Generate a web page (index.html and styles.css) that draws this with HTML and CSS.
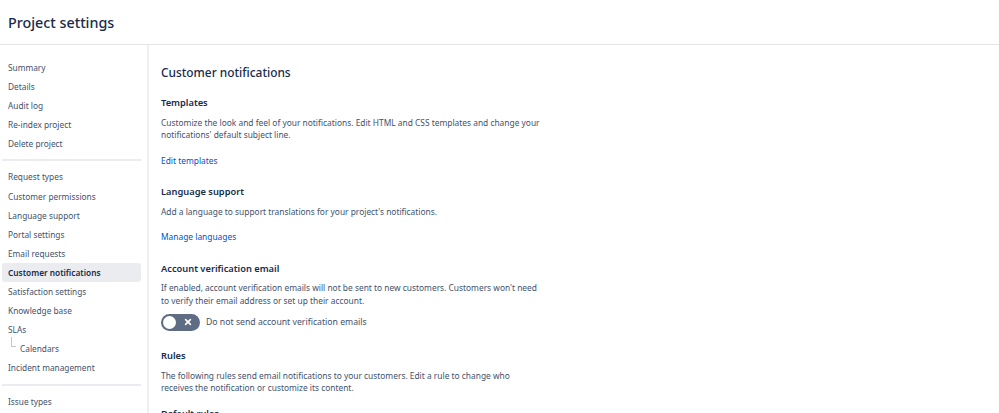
FILE: index.html
```html
<!DOCTYPE html>
<html>
<head>
<meta charset="utf-8">
<link rel="stylesheet" href="styles.css">
</head>
<body>
<header class="top">
  <h1 class="title">Project settings</h1>
</header>
<div class="layout">
  <nav class="side">
    <ul class="group">
      <li class="item">Summary</li>
      <li class="item">Details</li>
      <li class="item">Audit log</li>
      <li class="item">Re-index project</li>
      <li class="item">Delete project</li>
    </ul>
    <ul class="group">
      <li class="item">Request types</li>
      <li class="item">Customer permissions</li>
      <li class="item">Language support</li>
      <li class="item">Portal settings</li>
      <li class="item">Email requests</li>
      <li class="item active">Customer notifications</li>
      <li class="item">Satisfaction settings</li>
      <li class="item">Knowledge base</li>
      <li class="item">SLAs</li>
      <li class="item sub"><span class="elbow"></span>Calendars</li>
      <li class="item">Incident management</li>
    </ul>
    <ul class="group">
      <li class="item">Issue types</li>
    </ul>
  </nav>
  <main class="main">
    <h2 class="page-h">Customer notifications</h2>
    <section class="sec">
      <h3 class="sec-h">Templates</h3>
      <p class="desc">Customize the look and feel of your notifications. Edit HTML and CSS templates and change your notifications' default subject line.</p>
      <a class="link">Edit templates</a>
    </section>
    <section class="sec">
      <h3 class="sec-h">Language support</h3>
      <p class="desc">Add a language to support translations for your project's notifications.</p>
      <a class="link">Manage languages</a>
    </section>
    <section class="sec">
      <h3 class="sec-h">Account verification email</h3>
      <p class="desc tight">If enabled, account verification emails will not be sent to new customers. Customers won't need to verify their email address or set up their account.</p>
      <div class="toggle-row">
        <span class="toggle"><span class="knob"></span><svg class="x" viewBox="0 0 10 10" width="8" height="8"><path d="M2 2L8 8M8 2L2 8" stroke="#fff" stroke-width="2" stroke-linecap="round"/></svg></span>
        <span class="toggle-label">Do not send account verification emails</span>
      </div>
    </section>
    <section class="sec">
      <h3 class="sec-h">Rules</h3>
      <p class="desc">The following rules send email notifications to your customers. Edit a rule to change who receives the notification or customize its content.</p>
      <h4 class="sub-h">Default rules</h4>
    </section>
  </main>
</div>
</body>
</html>
```
FILE: styles.css
```css
* { box-sizing: border-box; }
html, body { margin: 0; padding: 0; background: #fff; overflow: hidden; }
body {
  font-family: "Noto Sans", "Open Sans", sans-serif;
  color: #172b4d;
  width: 999px;
  height: 413px;
}
.top {
  height: 45px;
  border-bottom: 1px solid #e4e5e9;
  padding: 12px 8px 0;
}
.title {
  margin: 0;
  font-size: 14.3px;
  font-weight: 500;
  line-height: 22px;
  color: #172b4d;
}
.layout { display: flex; }
.side {
  width: 149px;
  flex: none;
  border-right: 2px solid #eeeff2;
  padding: 13px 6px 0 2px;
  min-height: 368px;
}
.group {
  list-style: none;
  margin: 0;
  padding: 0 0 6px;
  border-bottom: 2px solid #ebecf0;
  margin-bottom: 6px;
}
.group:last-child { border-bottom: none; }
.item {
  height: 19.1px;
  line-height: 19.1px;
  font-size: 8.3px;
  color: #42526e;
  padding-left: 6px;
  border-radius: 3px;
  white-space: nowrap;
  position: relative;
}
.item.active {
  background: #ebecf0;
  color: #172b4d;
  font-weight: 600;
}
.item.sub { padding-left: 18px; }
.elbow {
  position: absolute;
  left: 9px;
  top: -2px;
  width: 5px;
  height: 10px;
  border-left: 1px solid #c1c7d0;
  border-bottom: 1px solid #c1c7d0;
}
.main {
  flex: 1;
  padding: 18px 0 0 12px;
}
.page-h {
  margin: 0 0 15px;
  font-size: 11.9px;
  font-weight: 500;
  line-height: 18px;
  color: #172b4d;
}
.sec { margin-bottom: 18.5px; width: 381px; }
.sec-h {
  margin: 0 0 6.5px;
  font-size: 9.3px;
  font-weight: 600;
  line-height: 14px;
  color: #172b4d;
}
.desc {
  margin: 0 0 12px;
  font-size: 8.4px;
  line-height: 12.5px;
  color: #42526e;
}
.desc.tight { margin-bottom: 6.5px; }
.link {
  display: block;
  font-size: 8.4px;
  line-height: 13px;
  color: #0052cc;
}
.toggle-row {
  display: flex;
  align-items: center;
  gap: 6px;
}
.toggle {
  position: relative;
  width: 39px;
  height: 17px;
  border-radius: 9px;
  background: #5e6c84;
  display: inline-flex;
  align-items: center;
  justify-content: flex-end;
  padding-right: 8px;
}
.knob {
  position: absolute;
  left: 2px;
  top: 2px;
  width: 13px;
  height: 13px;
  border-radius: 50%;
  background: #fff;
}
.toggle-label {
  font-size: 8.7px;
  color: #42526e;
}
.sub-h {
  margin: 10px 0 0;
  font-size: 9.2px;
  font-weight: 600;
  line-height: 13px;
  color: #172b4d;
}
```
